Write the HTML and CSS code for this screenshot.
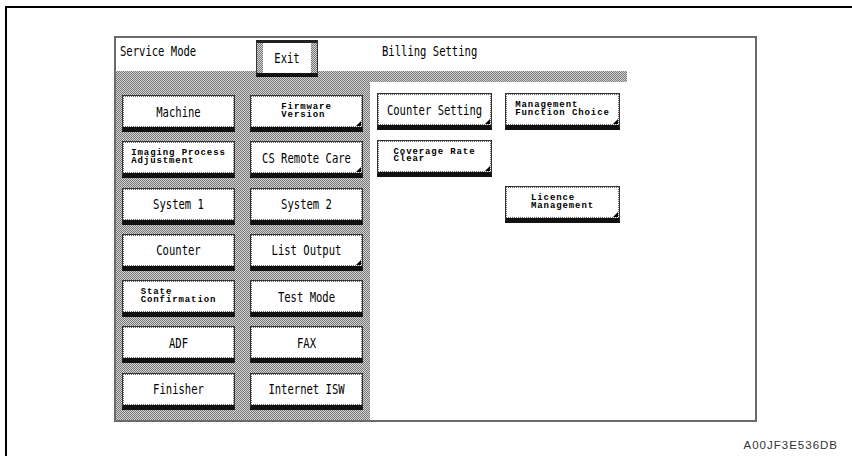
FILE: index.html
```html
<!DOCTYPE html>
<html lang="en">
<head>
  <meta charset="UTF-8" />
  <title>Service Mode - Billing Setting</title>
  <link rel="stylesheet" href="styles.css">
</head>
<body>
  <div class="sheet">
    <div class="screen">
      <div class="screen-head">
        <div class="head-title"><span class="txt">Service Mode</span></div>
        <div class="exit">
          <div class="exit-face"><span class="txt">Exit</span></div>
        </div>
        <div class="head-title"><span class="txt">Billing Setting</span></div>
      </div>

      <div class="screen-body">
        <!-- main menu -->
        <div class="menu">
          <div class="key"><span class="txt">Machine</span></div>
          <div class="key sub"><span class="small">Firmware<br>Version</span></div>
          <div class="key"><span class="small">Imaging Process<br>Adjustment</span></div>
          <div class="key sub"><span class="txt">CS Remote Care</span></div>
          <div class="key"><span class="txt">System 1</span></div>
          <div class="key"><span class="txt">System 2</span></div>
          <div class="key"><span class="txt">Counter</span></div>
          <div class="key sub"><span class="txt">List Output</span></div>
          <div class="key"><span class="small">State<br>Confirmation</span></div>
          <div class="key"><span class="txt">Test Mode</span></div>
          <div class="key"><span class="txt">ADF</span></div>
          <div class="key"><span class="txt">FAX</span></div>
          <div class="key"><span class="txt">Finisher</span></div>
          <div class="key"><span class="txt">Internet ISW</span></div>
        </div>

        <!-- billing setting submenu -->
        <div class="detail">
          <div class="detail-strip"></div>
          <div class="detail-grid">
            <div class="key sub"><span class="txt">Counter Setting</span></div>
            <div class="key sub"><span class="small">Management<br>Function Choice</span></div>
            <div class="key sub"><span class="small">Coverage Rate<br>Clear</span></div>
            <div class="empty"></div>
            <div class="empty"></div>
            <div class="key sub"><span class="small">Licence<br>Management</span></div>
          </div>
        </div>
      </div>
    </div>

    <div class="figure-code">A00JF3E536DB</div>
  </div>
</body>
</html>
```

FILE: styles.css
```css
* { box-sizing: border-box; }
body {
  margin: 0;
  background: #fff;
  color: #111;
  overflow: hidden;
  font-family: "DejaVu Sans Mono", monospace;
}

.sheet {
  margin: 6px 0 0 5px;
  width: 900px;
  height: 500px;
  border: 2px solid #000;
  padding: 28px 0 0 107px;
}

.screen {
  width: 643px;
  height: 386px;
  border: 2px solid #6a6a6a;
  display: flex;
  flex-direction: column;
}

/* shared dither pattern */
.menu,
.detail-strip,
.exit {
  background-color: #a4a4a4;
  background-image: repeating-conic-gradient(#767676 0 25%, #d4d4d4 0 50%);
  background-size: 2px 2px;
}

.txt {
  display: inline-block;
  font: 10.55px/14px "DejaVu Sans Mono", monospace;
  transform: scaleY(1.3);
  white-space: pre;
  color: #000;
}

.small {
  display: inline-block;
  font: bold 9px/7.5px "Liberation Mono", monospace;
  letter-spacing: 0.9px;
  text-align: left;
  white-space: pre;
  color: #000;
}

/* header */
.screen-head {
  height: 33px;
  flex: none;
  display: flex;
  align-items: flex-start;
  padding: 2px 0 0 4px;
}
.head-title {
  width: 136px;
}
.head-title + .exit + .head-title {
  margin-left: 64px;
}
.exit {
  position: relative;
  z-index: 1;
  width: 62px;
  height: 37px;
  flex: none;
  border: 1px solid #333;
  border-top: 3px solid #222;
  border-bottom: 4px solid #111;
  padding: 0 6px;
}
.exit-face {
  height: 100%;
  background: #fff;
  display: flex;
  align-items: center;
  justify-content: center;
}

/* body */
.screen-body {
  flex: 1;
  display: flex;
}
.menu {
  width: 254px;
  flex: none;
  padding: 24px 7px 0 6px;
  display: grid;
  grid-template-columns: 113px 113px;
  grid-auto-rows: 37px;
  column-gap: 15px;
  row-gap: 9.3px;
  align-content: start;
}
.detail {
  flex: 1;
}
.detail-strip {
  width: 257px;
  height: 11px;
}
.detail-grid {
  padding: 11px 0 0 7px;
  display: grid;
  grid-template-columns: 115px 115px;
  grid-auto-rows: 37px;
  column-gap: 13px;
  row-gap: 9.5px;
}

/* touch keys */
.key {
  position: relative;
  display: flex;
  align-items: center;
  justify-content: center;
  background: #fff;
  border: 1px solid #333;
  border-bottom: 5px solid #111;
}
.key::before {
  content: "";
  position: absolute;
  inset: 0;
  border: 1px dotted #666;
  pointer-events: none;
}
.key.sub::after {
  content: "";
  position: absolute;
  right: 1px;
  bottom: 1px;
  border-style: solid;
  border-width: 0 0 5px 5px;
  border-color: transparent transparent #000 transparent;
}

.figure-code {
  width: 724px;
  margin: 17px 0 0 0;
  text-align: right;
  font: 11.5px/13px "Liberation Sans", Arial, sans-serif;
  letter-spacing: 1px;
  color: #333;
}
```
